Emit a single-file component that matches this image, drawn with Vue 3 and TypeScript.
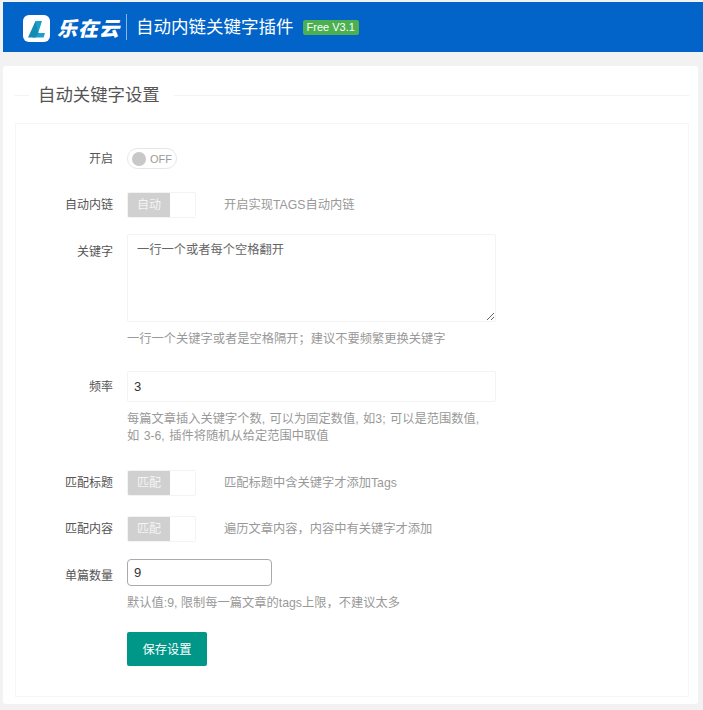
<script setup lang="ts">
interface ToggleRow { label: string; text: string; hint: string }
const autoRow: ToggleRow = { label: '自动内链', text: '自动', hint: '开启实现TAGS自动内链' }
const matchRows: ToggleRow[] = [
  { label: '匹配标题', text: '匹配', hint: '匹配标题中含关键字才添加Tags' },
  { label: '匹配内容', text: '匹配', hint: '遍历文章内容，内容中有关键字才添加' },
]
</script>

<template>
  <div class="page">
    <header class="topbar">
      <svg class="logo" width="27" height="27" viewBox="0 0 27 27">
        <rect width="27" height="27" rx="6" fill="#fff" />
        <path d="M12.5 6 H19 L15.2 18 H22 L20.6 22.5 H9.5 Z" fill="#1d9fca" />
        <path d="M12.5 6 L5 22.5 H12.5 L15.2 18 Z" fill="#148cb4" />
      </svg>
      <span class="brand">乐在云</span>
      <span class="divider"></span>
      <h1 class="title">自动内链关键字插件</h1>
      <span class="badge">Free V3.1</span>
    </header>

    <main class="card">
      <div class="legend">
        <span class="legend-line short"></span>
        <h2 class="legend-title">自动关键字设置</h2>
        <span class="legend-line"></span>
      </div>

      <section class="panel">
        <div class="row switch-row">
          <label class="label">开启</label>
          <div class="pill"><span class="knob"></span><span class="off">OFF</span></div>
        </div>

        <div class="row toggle-row auto-row">
          <label class="label">{{ autoRow.label }}</label>
          <div class="toggle"><span class="toggle-on">{{ autoRow.text }}</span><span class="toggle-off"></span></div>
          <span class="side-hint">{{ autoRow.hint }}</span>
        </div>

        <div class="row keyword-row">
          <label class="label">关键字</label>
          <div class="field">
            <textarea class="textarea" readonly>一行一个或者每个空格翻开</textarea>
            <p class="hint">一行一个关键字或者是空格隔开；建议不要频繁更换关键字</p>
          </div>
        </div>

        <div class="row rate-row">
          <label class="label">频率</label>
          <div class="field">
            <input class="input wide" value="3" readonly />
            <p class="hint two-line">每篇文章插入关键字个数, 可以为固定数值, 如3; 可以是范围数值,<br />如 3-6, 插件将随机从给定范围中取值</p>
          </div>
        </div>

        <div v-for="r in matchRows" :key="r.label" class="row toggle-row match-row">
          <label class="label">{{ r.label }}</label>
          <div class="toggle"><span class="toggle-on">{{ r.text }}</span><span class="toggle-off"></span></div>
          <span class="side-hint">{{ r.hint }}</span>
        </div>

        <div class="row count-row">
          <label class="label">单篇数量</label>
          <div class="field">
            <input class="input narrow" value="9" readonly />
            <p class="hint">默认值:9, 限制每一篇文章的tags上限，不建议太多</p>
          </div>
        </div>

        <div class="row submit-row">
          <span class="label"></span>
          <button class="save" type="button">保存设置</button>
        </div>
      </section>
    </main>
  </div>
</template>

<style>
html, body { background: #f2f2f2; margin: 0; }
</style>

<style scoped>
* { box-sizing: border-box; }
.page {
  width: 703px;
  height: 710px;
  padding: 2px 5px 0 3px;
  overflow: hidden;
  font-family: "Liberation Sans", "Noto Sans CJK SC", sans-serif;
  font-size: 12.25px;
  color: #666;
}
.topbar {
  height: 50px;
  margin-right: -5px;
  background: #0264c8;
  display: flex;
  align-items: center;
  padding-left: 20px;
  color: #fff;
}
.logo { flex: none; margin-top: 3px; }
.brand {
  margin-left: 7px;
  font-size: 20px;
  font-weight: 900;
  font-style: italic;
  letter-spacing: 1px;
  white-space: nowrap;
}
.divider { width: 1px; height: 26px; background: #8ab6e6; margin: 0 9px 0 6px; }
.title { margin: 0; font-size: 17.5px; font-weight: 400; line-height: 24px; }
.badge {
  margin-left: 9px;
  height: 15px;
  padding: 0 4px;
  border-radius: 2px;
  background: #4caf50;
  font-size: 11px;
  line-height: 15px;
  white-space: nowrap;
}
.card {
  margin-top: 14px;
  height: 638px;
  background: #fff;
  border-radius: 3px;
  padding: 12px 9px 0 12px;
}
.legend { height: 34px; margin-bottom: 11px; display: flex; align-items: center; gap: 10px; }
.legend-line { flex: 1; height: 1px; background: #f3f3f3; }
.legend-line.short { flex: none; width: 14px; }
.legend-title {
  margin: 0 0 0 -1px;
  font-size: 17.4px;
  font-weight: 400;
  color: #555;
  line-height: 34px;
  padding-right: 4px;
}
.panel {
  height: 574px;
  border: 1px solid #f5f5f5;
}
.row { display: flex; align-items: flex-start; }
.label {
  flex: none;
  width: 97px;
  text-align: right;
  color: #555;
  font-size: 12px;
  line-height: 20px;
}
.switch-row { margin-top: 24px; height: 21px; }
.switch-row .label { margin-top: 1px; }
.pill {
  margin-left: 14px;
  width: 50px;
  height: 21px;
  border: 1px solid #e6e6e6;
  border-radius: 11px;
  display: flex;
  align-items: center;
  padding-left: 4px;
  gap: 4px;
}
.knob { width: 14px; height: 14px; border-radius: 50%; background: #c8c8c8; }
.off { font-size: 11px; color: #9a9a9a; }
.toggle-row { height: 26px; align-items: center; }
.auto-row { margin-top: 23px; }
.match-row { margin-bottom: 20px; }
.toggle {
  margin-left: 14px;
  width: 69px;
  height: 26px;
  border: 1px solid #f3f3f3;
  border-radius: 2px;
  display: flex;
  flex: none;
  overflow: hidden;
}
.toggle-on {
  width: 42px;
  background: #d0d0d0;
  color: #f4f4f4;
  font-size: 12px;
  text-align: center;
  line-height: 24px;
}
.toggle-off { flex: 1; background: #fff; }
.side-hint { margin-left: 28px; color: #999; line-height: 20px; }
.field { margin-left: 14px; }
.keyword-row { margin-top: 16px; }
.keyword-row .label { margin-top: 8px; }
.textarea {
  display: block;
  width: 369px;
  height: 88px;
  padding: 6px 9px;
  border: 1px solid #f3f3f3;
  border-radius: 2px;
  font: inherit;
  line-height: 18px;
  color: #666;
  outline: none;
  resize: vertical;
}
.hint { margin: 8px 0 0; color: #999; line-height: 18px; }
.two-line { line-height: 17px; word-spacing: 1px; }
.rate-row { margin-top: 23px; }
.rate-row .label { margin-top: 6px; }
.rate-row .two-line { margin-top: 9px; }
.rate-row { margin-bottom: 25px; }
.input {
  display: block;
  height: 31px;
  padding: 0 6px;
  border-radius: 2px;
  border: 1px solid #f3f3f3;
  font: inherit;
  font-size: 13px;
  color: #333;
  outline: none;
}
.wide { width: 369px; }
.narrow { width: 145px; height: 27px; border: 1px solid #aaa; border-radius: 4px; }
.count-row { margin-top: -3px; }
.count-row .label { margin-top: 7px; }
.count-row .hint { margin-top: 8px; }
.submit-row { margin-top: 20px; }
.save {
  margin-left: 14px;
  width: 80px;
  height: 34px;
  background: #009688;
  border: 0;
  border-radius: 2px;
  color: #fff;
  font: inherit;
  padding: 0;
}
</style>
